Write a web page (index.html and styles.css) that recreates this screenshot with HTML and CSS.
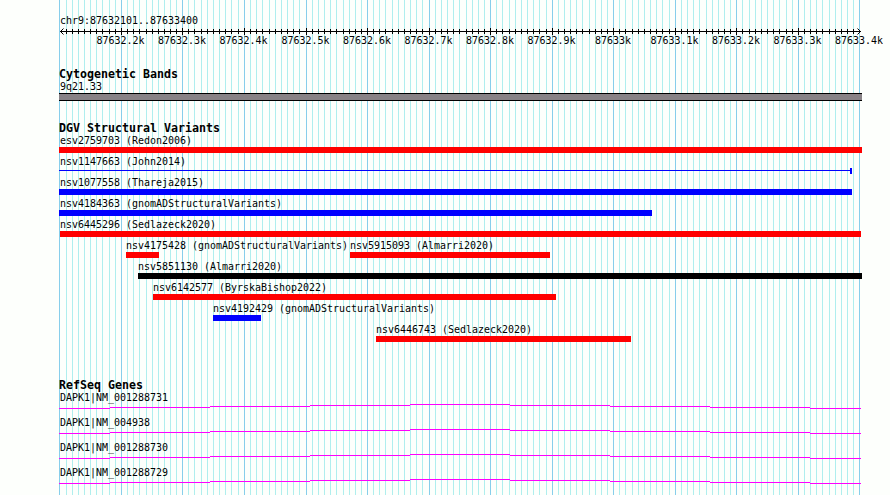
FILE: index.html
```html
<!DOCTYPE html>
<html lang="en">
<head>
  <meta charset="UTF-8" />
  <title>chr9:87632101..87633400</title>
  <link rel="stylesheet" href="styles.css">
</head>
<body>
  <svg class="grid" id="grid" width="890" height="495" shape-rendering="crispEdges"></svg>

  <div class="browser">
    <!-- Ruler -->
    <div class="ruler">
      <div class="label">chr9:87632101..87633400</div>
      <svg class="axis" id="axis" width="804" height="7"></svg>
      <div class="scale" id="scale"></div>
    </div>

    <!-- Cytogenetic Bands -->
    <div class="track bands">
      <h2>Cytogenetic Bands</h2>
      <div class="label">9q21.33</div>
      <div class="band"></div>
    </div>

    <!-- Structural Variants -->
    <div class="track variants">
      <h2>DGV Structural Variants</h2>
      <div id="variants"></div>
    </div>

    <!-- Genes -->
    <div class="track genes">
      <h2>RefSeq Genes</h2>
      <div id="genes"></div>
    </div>
  </div>

  <script src="script.js"></script>
</body>
</html>
```

FILE: styles.css
```css
body {
  margin: 0;
  width: 890px;
  height: 495px;
  overflow: hidden;
  background-color: #fdfffc;
  color: #000;
  font-family: "DejaVu Sans Mono", monospace;
  font-size: 9.97px;
}

.grid {
  position: absolute;
  top: 0;
  left: 0;
}

.minor {
  fill: #afeeee;
}

.major {
  fill: #87ceeb;
}

.browser {
  position: relative;
  padding: 14px 0 0 59px;
}

.label {
  height: 14px;
  line-height: 14px;
  padding-left: 1px;
  white-space: pre;
}

.axis {
  display: block;
}

.scale {
  display: flex;
  height: 12px;
  line-height: 12px;
  margin-left: 30.5px;
}

.scale span {
  flex: none;
  text-align: center;
}

.track h2 {
  margin: 0;
  height: 12px;
  line-height: 12px;
  font-size: 11.63px;
  white-space: pre;
}

.bands {
  margin-top: 21px;
}

.bands .label {
  height: 13px;
  line-height: 13px;
}

.band {
  box-sizing: border-box;
  width: 803px;
  height: 8px;
  border: solid #000;
  border-width: 1px 0;
  background-color: #888286;
}

.variants {
  margin-top: 20px;
}

.variants h2,
.genes h2 {
  line-height: 14px;
}

.variants .label,
.genes .label {
  line-height: 16px;
}

.row {
  display: flex;
  height: 21px;
}

.feature {
  flex: none;
}

.bar {
  height: 6px;
}

.feature.inset .label {
  padding-left: 0;
}

.red {
  background-color: #f00;
}

.blue {
  background-color: #00f;
}

.black {
  background-color: #000;
}

.line {
  box-sizing: border-box;
  height: 6px;
  border-right: 2px solid #00f;
  background: linear-gradient(#00f, #00f) 0 2px / 100% 1px no-repeat;
}

.genes {
  margin-top: 35px;
}

.gene {
  height: 25px;
}

.gene svg {
  display: block;
}
```

FILE: script.js
```js
const left = 59;

// x of every 10 bp gridline, every tenth one is a major line
const steps = [
  59, 66, 72, 78, 84, 90, 96, 102, 109, 115,
  121, 127, 133, 139, 146, 152, 158, 164, 170, 176,
  182, 188, 194, 201, 207, 213, 219, 225, 231, 238,
  244, 250, 256, 262, 269, 275, 281, 287, 293, 299,
  306, 312, 318, 324, 330, 336, 343, 349, 355, 361,
  367, 373, 379, 385, 392, 398, 404, 410, 416, 422,
  429, 435, 441, 447, 453, 459, 466, 472, 478, 484,
  490, 496, 502, 509, 515, 521, 527, 533, 539, 546,
  552, 558, 564, 570, 576, 582, 589, 595, 601, 607,
  613, 619, 625, 632, 638, 644, 650, 656, 662, 669,
  675, 681, 687, 693, 699, 706, 712, 718, 724, 730,
  736, 742, 749, 755, 761, 767, 773, 779, 786, 792,
  798, 804, 810, 816, 822, 829, 835, 841, 847, 853,
  859
];

const variants = [
  [{ name: "esv2759703 (Redon2006)", start: 59, end: 862, type: "red" }],
  [{ name: "nsv1147663 (John2014)", start: 59, end: 852, type: "line" }],
  [{ name: "nsv1077558 (Thareja2015)", start: 59, end: 852, type: "blue" }],
  [{ name: "nsv4184363 (gnomADStructuralVariants)", start: 59, end: 652, type: "blue" }],
  [{ name: "nsv6445296 (Sedlazeck2020)", start: 60, end: 861, type: "red" }],
  [
    { name: "nsv4175428 (gnomADStructuralVariants)", start: 126, end: 159, type: "red" },
    { name: "nsv5915093 (Almarri2020)", start: 350, end: 550, type: "red" }
  ],
  [{ name: "nsv5851130 (Almarri2020)", start: 138, end: 862, type: "black" }],
  [{ name: "nsv6142577 (ByrskaBishop2022)", start: 153, end: 556, type: "red" }],
  [{ name: "nsv4192429 (gnomADStructuralVariants)", start: 213, end: 261, type: "blue" }],
  [{ name: "nsv6446743 (Sedlazeck2020)", start: 376, end: 631, type: "red" }]
];

const genes = ["NM_001288731", "NM_004938", "NM_001288730", "NM_001288729"];

document.getElementById("grid").innerHTML = steps.map((x, i) =>
  `<rect class="${i % 10 ? "minor" : "major"}" x="${x}" y="0" width="1" height="495" />`
).join("");

// Axis line, ticks and the two arrow heads
let axis = '<rect x="1" y="3" width="801" height="1" />';
steps.slice(1, -1).forEach((x, i) => {
  const major = (i + 1) % 10 === 0;
  axis += `<rect x="${x - left}" y="${major ? 0 : 1}" width="1" height="${major ? 7 : 5}" />`;
});
axis += '<path d="M4.5 0.5L1.5 3.5L4.5 6.5M798.5 0.5L801.5 3.5L798.5 6.5" fill="none" stroke="#000" />';
document.getElementById("axis").innerHTML = axis;

// Each scale label is centred on its major line
const scale = document.getElementById("scale");
for (let i = 10; i < steps.length; i += 10) {
  const span = document.createElement("span");
  const value = 876321 + i / 10;
  span.textContent = (value % 10 ? (value / 10).toFixed(1) : value / 10) + "k";
  span.style.width = (steps[i] - steps[i - 10]) + "px";
  scale.appendChild(span);
}

const variantList = document.getElementById("variants");
variants.forEach((features) => {
  const row = document.createElement("div");
  row.className = "row";
  let x = left;
  features.forEach((f) => {
    const width = f.end - f.start;
    const el = document.createElement("div");
    el.className = f.start > left ? "feature inset" : "feature";
    el.style.marginLeft = (f.start - x) + "px";
    el.style.width = width + "px";
    el.innerHTML = `
      <div class="label">${f.name}</div>
      <div class="${f.type === "line" ? "line" : "bar " + f.type}"></div>
    `;
    row.appendChild(el);
    x = f.end;
  });
  variantList.appendChild(row);
});

// Introns rise one pixel every 100px up to the middle of the gene
const edges = [0, 51, 151, 251, 351, 451, 551, 651, 751, 802];
const heights = [4, 3, 2, 1, 0, 1, 2, 3, 4];
document.getElementById("genes").innerHTML = genes.map((name) => `
  <div class="gene">
    <div class="label">DAPK1|${name}</div>
    <svg width="802" height="5" fill="#f0f" shape-rendering="crispEdges">
      ${heights.map((y, i) => `<rect x="${edges[i]}" y="${y}" width="${edges[i + 1] - edges[i]}" height="1" />`).join("")}
    </svg>
  </div>
`).join("");
```
